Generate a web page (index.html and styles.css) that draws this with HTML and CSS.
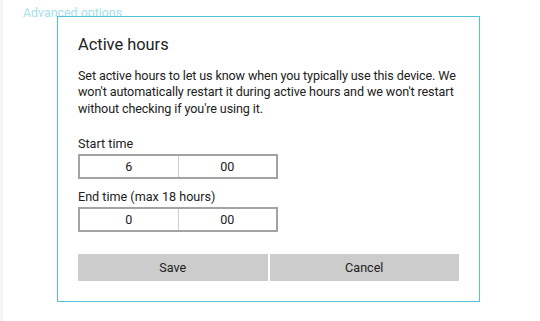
FILE: index.html
```html
<!DOCTYPE html>
<html>
<head>
<meta charset="utf-8">
<link rel="stylesheet" href="styles.css">
</head>
<body>
<div class="page">
  <a class="link">Advanced options</a>
</div>
<div class="dialog">
  <h1 class="title">Active hours</h1>
  <p class="desc">Set active hours to let us know when you typically use this device. We<br>won't automatically restart it during active hours and we won't restart<br>without checking if you're using it.</p>
  <div class="field">
    <div class="label">Start time</div>
    <div class="time"><span class="cell">6</span><span class="cell">00</span></div>
  </div>
  <div class="field">
    <div class="label">End time (max 18 hours)</div>
    <div class="time"><span class="cell">0</span><span class="cell">00</span></div>
  </div>
  <div class="buttons">
    <button class="btn">Save</button>
    <button class="btn">Cancel</button>
  </div>
</div>
</body>
</html>
```
FILE: styles.css
```css
html, body {
  margin: 0;
  padding: 0;
  background: #ffffff;
  font-family: "Roboto", "Noto Sans", sans-serif;
  color: #222222;
}
.page {
  height: 321px;
  border-left: 3px solid #f5f5f5;
  box-sizing: border-box;
  padding: 2px 0 0 20px;
}
.link {
  font-size: 12.4px;
  line-height: 18px;
  color: #a6dfec;
}
.dialog {
  position: absolute;
  left: 57px;
  top: 16px;
  width: 423px;
  height: 286px;
  box-sizing: border-box;
  border: 1px solid #4fc3da;
  background: #ffffff;
  padding: 15px 20px 0 20px;
}
.title {
  margin: 0;
  font-size: 16.4px;
  font-weight: 400;
  line-height: 26px;
  color: #222222;
}
.desc {
  margin: 10px 0 0 0;
  font-size: 12.6px;
  line-height: 16.4px;
  letter-spacing: -0.12px;
  white-space: nowrap;
  color: #222222;
}
.field {
  margin-top: 17px;
}
.field + .field {
  margin-top: 8px;
}
.label {
  font-size: 12.6px;
  line-height: 20px;
}
.time {
  display: flex;
  width: 200px;
  height: 25px;
  box-sizing: border-box;
  border: 2px solid #a3a3a3;
}
.cell {
  flex: 1;
  display: flex;
  align-items: center;
  justify-content: center;
  font-size: 12.6px;
}
.cell + .cell {
  border-left: 1px solid #cfcfcf;
}
.buttons {
  display: flex;
  gap: 2px;
  margin-top: 22px;
  width: 381px;
}
.btn {
  flex: 1;
  height: 27px;
  border: none;
  background: #cccccc;
  font-family: inherit;
  font-size: 12.6px;
  color: #222222;
  padding: 0;
}
```
